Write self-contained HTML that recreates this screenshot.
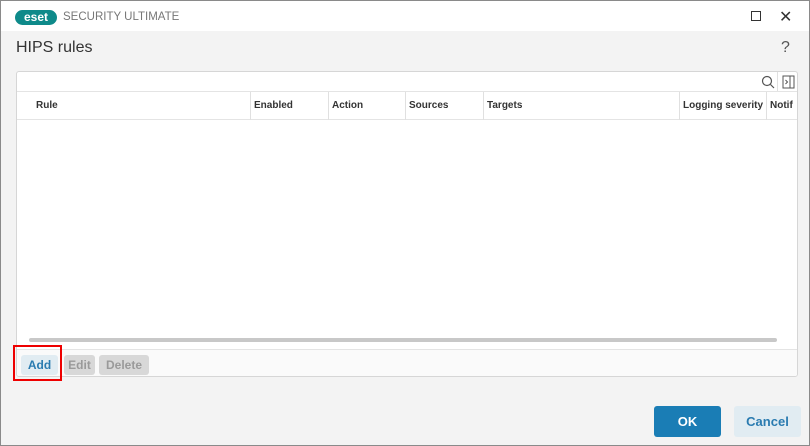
<!DOCTYPE html>
<html><head><meta charset="utf-8"><style>
*{margin:0;padding:0;box-sizing:border-box}
body{width:810px;height:446px;overflow:hidden;font-family:"Liberation Sans",sans-serif;background:#f2f2f2;position:relative}
.win{position:absolute;left:0;top:0;width:810px;height:446px;border:1px solid #8a8a8a;background:#f3f3f3}
.title{position:absolute;left:0;top:0;width:808px;height:30px;background:#fff}
.logo{position:absolute;left:14px;top:9px;width:42px;height:15px;background:#0e8a8a;border-radius:8px;color:#fff;font-weight:bold;font-size:12px;line-height:15px;text-align:center}
.brand{position:absolute;left:62px;top:10px;font-size:11.5px;color:#777}
.h1{position:absolute;left:15px;top:38px;font-size:16px;color:#333}
.q{position:absolute;left:780px;top:38px;font-size:16px;color:#555}
.panel{position:absolute;left:15px;top:70px;width:782px;height:306px;border:1px solid #d6d6d6;background:#fff;border-radius:3px;overflow:hidden}
.hdr{position:absolute;left:0;top:19px;width:780px;height:29px;border-top:1px solid #e4e4e4;border-bottom:1px solid #e4e4e4;font-size:10px;font-weight:bold;color:#333}
.hdr span{position:absolute;top:8px;white-space:nowrap}
.hdr i{position:absolute;top:0;width:1px;height:28px;background:#e0e0e0}
.sb{position:absolute;left:12px;top:266px;width:748px;height:4px;background:#c8c8c8;border-radius:2px}
.foot{position:absolute;left:0;top:277px;width:780px;height:28px;border-top:1px solid #e4e4e4;background:#fafafa}
.btn{position:absolute;top:5px;height:20px;border-radius:3px;font-size:12px;font-weight:bold;line-height:20px;text-align:center}
.red{position:absolute;left:12px;top:344px;width:49px;height:36px;border:2px solid #e00}
.ok{position:absolute;left:653px;top:405px;width:67px;height:31px;background:#1a7db5;color:#fff;border-radius:3px;font-size:13px;font-weight:bold;text-align:center;line-height:31px}
.cn{position:absolute;left:733px;top:405px;width:67px;height:31px;background:#e1ecf2;color:#2a7bb0;border-radius:3px;font-size:13px;font-weight:bold;text-align:center;line-height:31px}
</style></head><body><div class="win">
<div class="title"><div class="logo">eset</div><div class="brand">SECURITY ULTIMATE</div>
<div style="position:absolute;left:750px;top:10px;width:10px;height:10px;border:1px solid #333"></div>
<div style="position:absolute;left:778px;top:6px;font-size:16px;color:#333">✕</div></div>
<div class="h1">HIPS rules</div><div class="q">?</div>
<div class="panel">
<svg style="position:absolute;left:743px;top:2px" width="16" height="16"><circle cx="7" cy="7" r="4.5" fill="none" stroke="#555" stroke-width="1.2"/><line x1="10.5" y1="10.5" x2="14" y2="14" stroke="#555" stroke-width="1.2"/></svg>
<div style="position:absolute;left:760px;top:0;width:1px;height:19px;background:#e0e0e0"></div>
<svg style="position:absolute;left:765px;top:3px" width="14" height="14"><rect x="1" y="1" width="11" height="12" fill="none" stroke="#555"/><line x1="8" y1="1" x2="8" y2="13" stroke="#555"/><path d="M3.5 5 L5.5 7 L3.5 9" fill="none" stroke="#555"/></svg>
<div class="hdr"><span style="left:19px">Rule</span><i style="left:233px"></i><span style="left:237px">Enabled</span><i style="left:311px"></i><span style="left:315px">Action</span><i style="left:388px"></i><span style="left:392px">Sources</span><i style="left:466px"></i><span style="left:470px">Targets</span><i style="left:662px"></i><span style="left:666px">Logging severity</span><i style="left:749px"></i><span style="left:753px">Notif</span></div>
<div class="sb"></div>
<div class="foot"><div class="btn" style="left:4px;width:37px;background:#e1ecf2;color:#2a7bb0">Add</div><div class="btn" style="left:47px;width:31px;background:#d8d8d8;color:#9a9a9a">Edit</div><div class="btn" style="left:82px;width:50px;background:#d8d8d8;color:#9a9a9a">Delete</div></div>
</div>
<div class="red"></div>
<div class="ok">OK</div><div class="cn">Cancel</div>
</div></body></html>
